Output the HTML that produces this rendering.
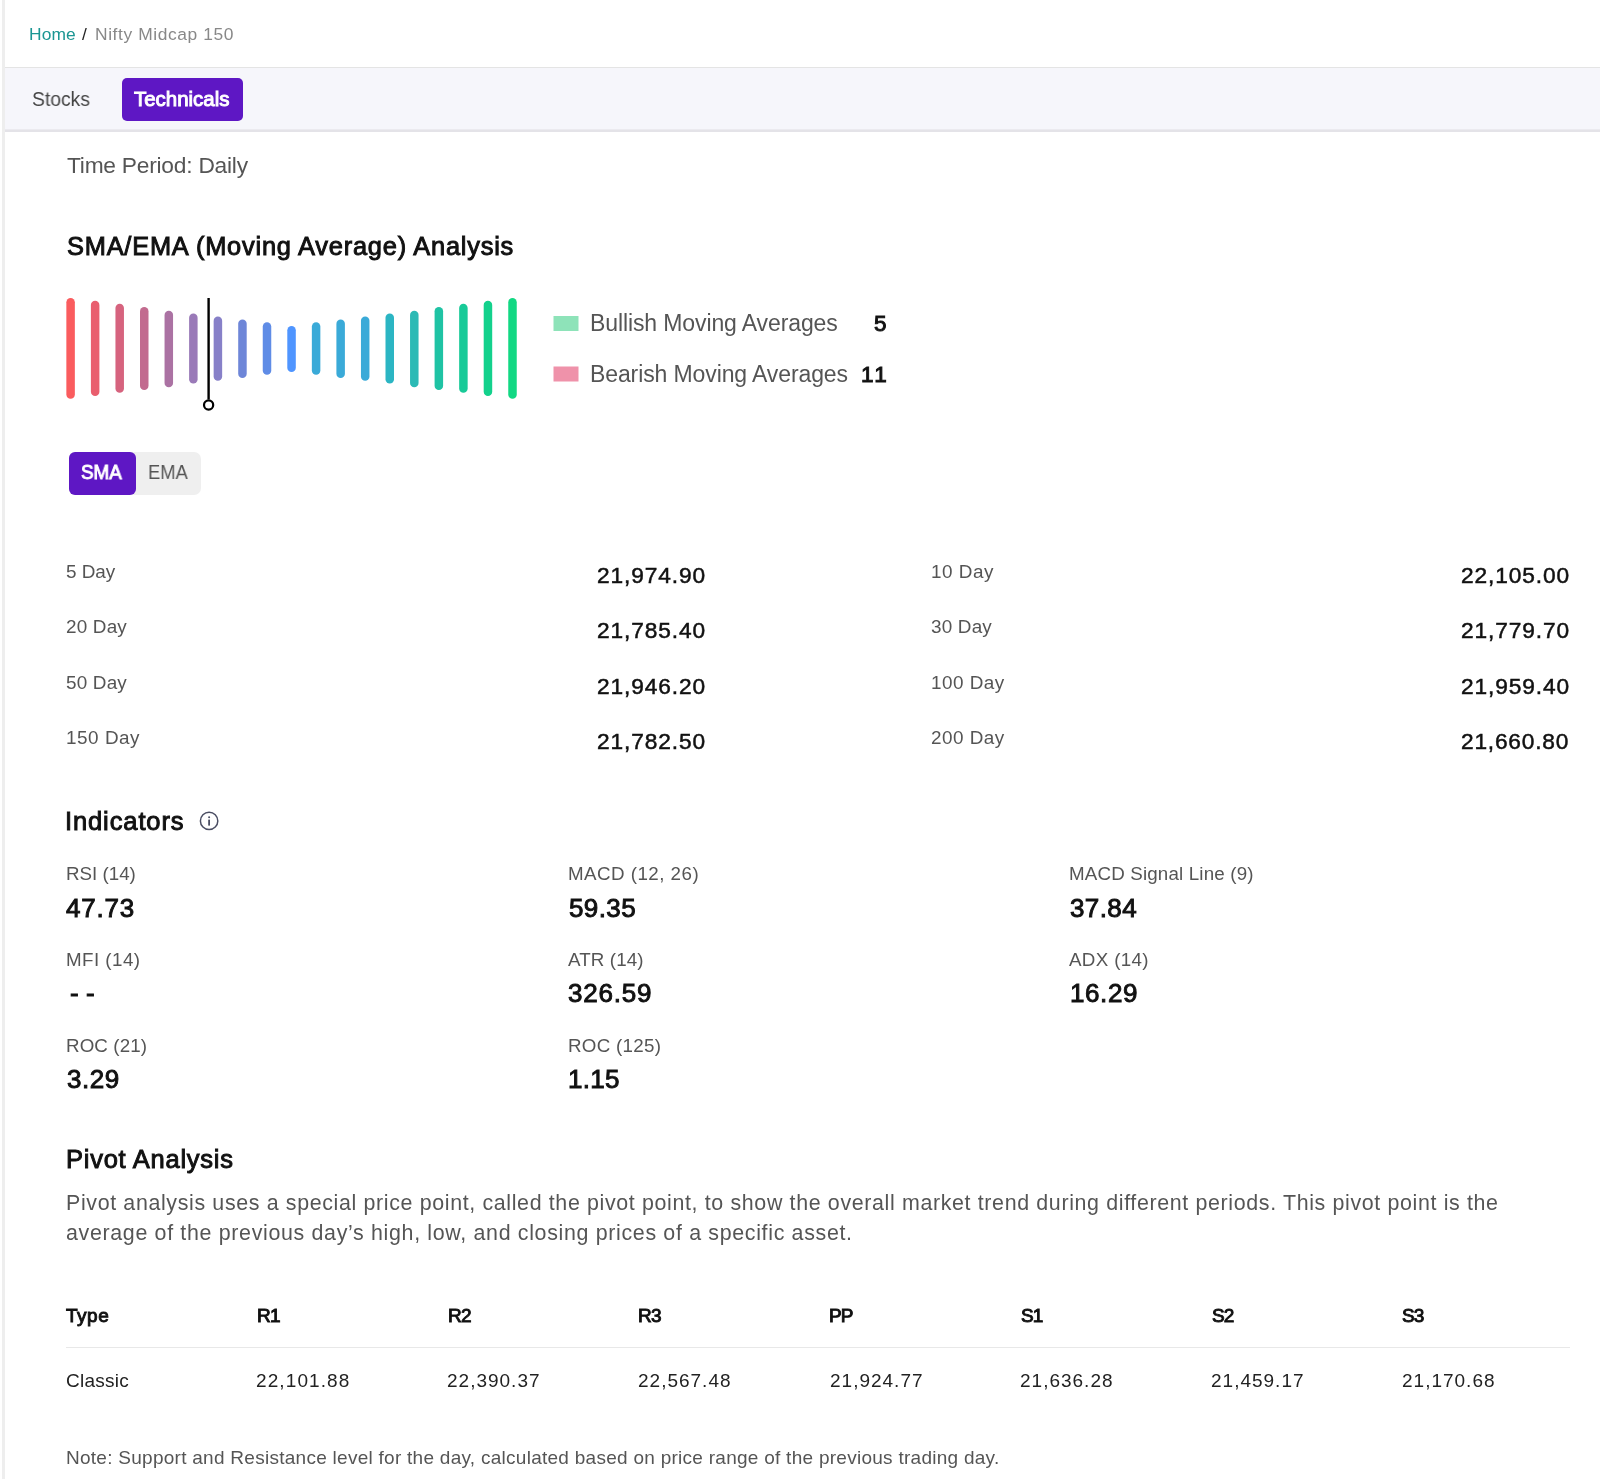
<!DOCTYPE html>
<html><head><meta charset="utf-8"><title>Nifty Midcap 150 Technicals</title>
<style>
html,body{margin:0;padding:0;background:#fff;}
body{width:1600px;height:1479px;position:relative;overflow:hidden;font-family:"Liberation Sans",sans-serif;}
.t{position:absolute;white-space:nowrap;line-height:40px;will-change:transform;}
.lb{position:absolute;left:2px;top:0;width:3px;height:1479px;background:#eeeeee;}
.strip{position:absolute;left:5px;top:67px;width:1595px;height:62px;background:#f6f6fb;border-top:1px solid #e4e4e4;}
.strip2{position:absolute;left:5px;top:129px;width:1595px;height:1px;background:#ebeaef;}
.strip3{position:absolute;left:5px;top:130px;width:1595px;height:2px;background:#e4e3e8;}
.tech{position:absolute;left:122px;top:78px;width:120.5px;height:42.5px;background:#5e17c4;border-radius:5px;}
.tog{position:absolute;left:69px;top:452px;width:131.6px;height:43px;background:#efefef;border-radius:7px;}
.sma{position:absolute;left:69px;top:452px;width:67px;height:43px;background:#5e17c4;border-radius:6px;}
.sep{position:absolute;left:66px;top:1346.5px;width:1504px;height:1.5px;background:#e8e8e8;}
.chart{position:absolute;left:0;top:0;}
</style></head><body>
<div class="lb"></div>
<div class="strip"></div><div class="strip2"></div><div class="strip3"></div>
<div class="tech"></div>
<div class="tog"></div><div class="sma"></div>
<div class="sep"></div>
<svg class="chart" width="1600" height="1479" viewBox="0 0 1600 1479"><line x1="70.60" y1="302.25" x2="70.60" y2="394.50" stroke="#fa5c5e" stroke-width="8.5" stroke-linecap="round"/><line x1="95.15" y1="305.05" x2="95.15" y2="391.75" stroke="#e95e6e" stroke-width="8.5" stroke-linecap="round"/><line x1="119.70" y1="308.00" x2="119.70" y2="388.55" stroke="#d6637e" stroke-width="8.5" stroke-linecap="round"/><line x1="144.25" y1="311.15" x2="144.25" y2="385.75" stroke="#c26b8f" stroke-width="8.5" stroke-linecap="round"/><line x1="168.80" y1="315.05" x2="168.80" y2="382.95" stroke="#ab72a3" stroke-width="8.5" stroke-linecap="round"/><line x1="193.35" y1="317.85" x2="193.35" y2="379.15" stroke="#9a7ab8" stroke-width="8.5" stroke-linecap="round"/><line x1="217.90" y1="320.65" x2="217.90" y2="376.55" stroke="#8780c8" stroke-width="8.5" stroke-linecap="round"/><line x1="242.45" y1="323.65" x2="242.45" y2="373.75" stroke="#6e86d8" stroke-width="8.5" stroke-linecap="round"/><line x1="267.00" y1="326.45" x2="267.00" y2="370.45" stroke="#5f8ce6" stroke-width="8.5" stroke-linecap="round"/><line x1="291.55" y1="330.25" x2="291.55" y2="367.65" stroke="#4f95ff" stroke-width="8.5" stroke-linecap="round"/><line x1="316.10" y1="326.45" x2="316.10" y2="370.45" stroke="#3aaad8" stroke-width="8.5" stroke-linecap="round"/><line x1="340.65" y1="323.65" x2="340.65" y2="373.75" stroke="#3aaad8" stroke-width="8.5" stroke-linecap="round"/><line x1="365.20" y1="320.65" x2="365.20" y2="376.55" stroke="#3aaad8" stroke-width="8.5" stroke-linecap="round"/><line x1="389.75" y1="317.85" x2="389.75" y2="379.15" stroke="#2bb5c3" stroke-width="8.5" stroke-linecap="round"/><line x1="414.30" y1="315.05" x2="414.30" y2="382.95" stroke="#2bbab5" stroke-width="8.5" stroke-linecap="round"/><line x1="438.85" y1="311.15" x2="438.85" y2="385.75" stroke="#1fc3a4" stroke-width="8.5" stroke-linecap="round"/><line x1="463.40" y1="308.00" x2="463.40" y2="388.55" stroke="#18ca98" stroke-width="8.5" stroke-linecap="round"/><line x1="487.95" y1="305.05" x2="487.95" y2="391.75" stroke="#13d18c" stroke-width="8.5" stroke-linecap="round"/><line x1="512.50" y1="302.25" x2="512.50" y2="394.50" stroke="#12d883" stroke-width="8.5" stroke-linecap="round"/><line x1="208.6" y1="298" x2="208.6" y2="399.5" stroke="#000" stroke-width="2.4"/><circle cx="208.6" cy="405" r="4.6" fill="#fff" stroke="#000" stroke-width="2.2"/><rect x="553.5" y="316" width="25" height="15" fill="#8ee3b9"/><rect x="553.5" y="366.5" width="25" height="15" fill="#ef92aa"/><circle cx="209.1" cy="820.9" r="8.7" fill="none" stroke="#4b4e63" stroke-width="1.5"/><rect x="208.2" y="819.6" width="1.8" height="6" fill="#4b4e63"/><circle cx="209.1" cy="817.3" r="1" fill="#4b4e63"/></svg>
<div class="t" style="left:29.30px;top:14px;font-size:17.4px;color:#1b9693;letter-spacing:0.107px;">Home</div>
<div class="t" style="left:82.30px;top:14px;font-size:17.4px;color:#222;letter-spacing:0.000px;">/</div>
<div class="t" style="left:94.50px;top:14px;font-size:17.4px;color:#888;letter-spacing:0.587px;">Nifty Midcap 150</div>
<div class="t" style="left:32.25px;top:79px;font-size:19.8px;color:#444;letter-spacing:0.000px;transform:scaleX(0.9755);transform-origin:0 0;">Stocks</div>
<div class="t" style="left:134.40px;top:79px;font-size:20.3px;color:#fff;letter-spacing:0.000px;transform:scaleX(1.0084);transform-origin:0 0;-webkit-text-stroke:0.95px currentColor;">Technicals</div>
<div class="t" style="left:66.70px;top:145px;font-size:22.75px;color:#555;letter-spacing:-0.235px;">Time Period: Daily</div>
<div class="t" style="left:66.80px;top:226px;font-size:25.4px;color:#111;letter-spacing:0.775px;-webkit-text-stroke:0.95px currentColor;">SMA/EMA (Moving Average) Analysis</div>
<div class="t" style="left:589.95px;top:303px;font-size:23px;color:#555;letter-spacing:-0.109px;">Bullish Moving Averages</div>
<div class="t" style="left:589.95px;top:354px;font-size:23px;color:#555;letter-spacing:-0.109px;">Bearish Moving Averages</div>
<div class="t" style="left:874.30px;top:304px;font-size:22.5px;color:#111;letter-spacing:0.000px;-webkit-text-stroke:0.95px currentColor;">5</div>
<div class="t" style="left:860.80px;top:355px;font-size:22.5px;color:#111;letter-spacing:2.400px;-webkit-text-stroke:0.95px currentColor;">11</div>
<div class="t" style="left:81.30px;top:452px;font-size:20px;color:#fff;letter-spacing:0.000px;transform:scaleX(0.9405);transform-origin:0 0;-webkit-text-stroke:0.95px currentColor;">SMA</div>
<div class="t" style="left:148.40px;top:452px;font-size:20px;color:#555;letter-spacing:0.000px;transform:scaleX(0.9185);transform-origin:0 0;">EMA</div>
<div class="t" style="left:66.20px;top:552px;font-size:18.9px;color:#555;letter-spacing:-0.040px;">5 Day</div>
<div class="t" style="left:596.50px;top:555px;font-size:22.7px;color:#111;letter-spacing:0.900px;-webkit-text-stroke:0.5px currentColor;">21,974.90</div>
<div class="t" style="left:930.50px;top:552px;font-size:18.9px;color:#555;letter-spacing:0.512px;">10 Day</div>
<div class="t" style="left:1461.10px;top:555px;font-size:22.7px;color:#111;letter-spacing:0.900px;-webkit-text-stroke:0.5px currentColor;">22,105.00</div>
<div class="t" style="left:66.20px;top:607px;font-size:18.9px;color:#555;letter-spacing:0.192px;">20 Day</div>
<div class="t" style="left:596.50px;top:610px;font-size:22.7px;color:#111;letter-spacing:0.900px;-webkit-text-stroke:0.5px currentColor;">21,785.40</div>
<div class="t" style="left:930.50px;top:607px;font-size:18.9px;color:#555;letter-spacing:0.192px;">30 Day</div>
<div class="t" style="left:1461.10px;top:610px;font-size:22.7px;color:#111;letter-spacing:0.900px;-webkit-text-stroke:0.5px currentColor;">21,779.70</div>
<div class="t" style="left:66.20px;top:663px;font-size:18.9px;color:#555;letter-spacing:0.192px;">50 Day</div>
<div class="t" style="left:596.50px;top:666px;font-size:22.7px;color:#111;letter-spacing:0.900px;-webkit-text-stroke:0.5px currentColor;">21,946.20</div>
<div class="t" style="left:930.50px;top:663px;font-size:18.9px;color:#555;letter-spacing:0.480px;">100 Day</div>
<div class="t" style="left:1461.10px;top:666px;font-size:22.7px;color:#111;letter-spacing:0.900px;-webkit-text-stroke:0.5px currentColor;">21,959.40</div>
<div class="t" style="left:66.20px;top:718px;font-size:18.9px;color:#555;letter-spacing:0.533px;">150 Day</div>
<div class="t" style="left:596.50px;top:721px;font-size:22.7px;color:#111;letter-spacing:0.900px;-webkit-text-stroke:0.5px currentColor;">21,782.50</div>
<div class="t" style="left:930.50px;top:718px;font-size:18.9px;color:#555;letter-spacing:0.480px;">200 Day</div>
<div class="t" style="left:1461.20px;top:721px;font-size:22.7px;color:#111;letter-spacing:0.800px;-webkit-text-stroke:0.5px currentColor;">21,660.80</div>
<div class="t" style="left:65.40px;top:801px;font-size:25.5px;color:#111;letter-spacing:0.889px;-webkit-text-stroke:0.95px currentColor;">Indicators</div>
<div class="t" style="left:66.20px;top:854px;font-size:18.75px;color:#555;letter-spacing:0.000px;">RSI (14)</div>
<div class="t" style="left:66.40px;top:888px;font-size:26px;color:#111;letter-spacing:0.800px;-webkit-text-stroke:0.95px currentColor;">47.73</div>
<div class="t" style="left:567.80px;top:854px;font-size:18.75px;color:#555;letter-spacing:0.467px;">MACD (12, 26)</div>
<div class="t" style="left:568.60px;top:888px;font-size:26px;color:#111;letter-spacing:0.400px;-webkit-text-stroke:0.95px currentColor;">59.35</div>
<div class="t" style="left:1068.75px;top:854px;font-size:18.75px;color:#555;letter-spacing:0.168px;">MACD Signal Line (9)</div>
<div class="t" style="left:1069.55px;top:888px;font-size:26px;color:#111;letter-spacing:0.400px;-webkit-text-stroke:0.95px currentColor;">37.84</div>
<div class="t" style="left:65.90px;top:940px;font-size:18.75px;color:#555;letter-spacing:0.457px;">MFI (14)</div>
<div class="t" style="left:69.55px;top:973px;font-size:26px;color:#111;letter-spacing:-0.000px;-webkit-text-stroke:0.95px currentColor;">- -</div>
<div class="t" style="left:567.90px;top:940px;font-size:18.75px;color:#555;letter-spacing:0.114px;">ATR (14)</div>
<div class="t" style="left:568.30px;top:973px;font-size:26px;color:#111;letter-spacing:0.800px;-webkit-text-stroke:0.95px currentColor;">326.59</div>
<div class="t" style="left:1068.80px;top:940px;font-size:18.75px;color:#555;letter-spacing:0.343px;">ADX (14)</div>
<div class="t" style="left:1069.60px;top:973px;font-size:26px;color:#111;letter-spacing:0.600px;-webkit-text-stroke:0.95px currentColor;">16.29</div>
<div class="t" style="left:65.90px;top:1026px;font-size:18.75px;color:#555;letter-spacing:0.114px;">ROC (21)</div>
<div class="t" style="left:67.05px;top:1059px;font-size:26px;color:#111;letter-spacing:0.533px;-webkit-text-stroke:0.95px currentColor;">3.29</div>
<div class="t" style="left:567.50px;top:1026px;font-size:18.75px;color:#555;letter-spacing:0.300px;">ROC (125)</div>
<div class="t" style="left:568.40px;top:1059px;font-size:26px;color:#111;letter-spacing:0.267px;-webkit-text-stroke:0.95px currentColor;">1.15</div>
<div class="t" style="left:66.00px;top:1139px;font-size:25.5px;color:#111;letter-spacing:0.738px;-webkit-text-stroke:0.95px currentColor;">Pivot Analysis</div>
<div class="t" style="left:66.25px;top:1183px;font-size:21.4px;color:#555;letter-spacing:0.643px;">Pivot analysis uses a special price point, called the pivot point, to show the overall market trend during different periods. This pivot point is the</div>
<div class="t" style="left:66.00px;top:1213px;font-size:21.4px;color:#555;letter-spacing:0.668px;">average of the previous day’s high, low, and closing prices of a specific asset.</div>
<div class="t" style="left:66.10px;top:1296px;font-size:19px;color:#111;letter-spacing:0.533px;-webkit-text-stroke:0.95px currentColor;">Type</div>
<div class="t" style="left:65.75px;top:1361px;font-size:19px;color:#222;letter-spacing:0.267px;">Classic</div>
<div class="t" style="left:256.78px;top:1296px;font-size:19px;color:#111;letter-spacing:-0.800px;-webkit-text-stroke:0.95px currentColor;">R1</div>
<div class="t" style="left:256.20px;top:1361px;font-size:19px;color:#222;letter-spacing:1.100px;">22,101.88</div>
<div class="t" style="left:447.62px;top:1296px;font-size:19px;color:#111;letter-spacing:-0.800px;-webkit-text-stroke:0.95px currentColor;">R2</div>
<div class="t" style="left:446.92px;top:1361px;font-size:19px;color:#222;letter-spacing:1.000px;">22,390.37</div>
<div class="t" style="left:638.46px;top:1296px;font-size:19px;color:#111;letter-spacing:-0.800px;-webkit-text-stroke:0.95px currentColor;">R3</div>
<div class="t" style="left:638.23px;top:1361px;font-size:19px;color:#222;letter-spacing:1.000px;">22,567.48</div>
<div class="t" style="left:829.30px;top:1296px;font-size:19px;color:#111;letter-spacing:-0.800px;-webkit-text-stroke:0.95px currentColor;">PP</div>
<div class="t" style="left:829.53px;top:1361px;font-size:19px;color:#222;letter-spacing:1.000px;">21,924.77</div>
<div class="t" style="left:1020.94px;top:1296px;font-size:19px;color:#111;letter-spacing:-0.800px;-webkit-text-stroke:0.95px currentColor;">S1</div>
<div class="t" style="left:1020.04px;top:1361px;font-size:19px;color:#222;letter-spacing:1.000px;">21,636.28</div>
<div class="t" style="left:1211.78px;top:1296px;font-size:19px;color:#111;letter-spacing:-0.800px;-webkit-text-stroke:0.95px currentColor;">S2</div>
<div class="t" style="left:1211.34px;top:1361px;font-size:19px;color:#222;letter-spacing:1.000px;">21,459.17</div>
<div class="t" style="left:1402.40px;top:1296px;font-size:19px;color:#111;letter-spacing:-0.800px;-webkit-text-stroke:0.95px currentColor;">S3</div>
<div class="t" style="left:1402.10px;top:1361px;font-size:19px;color:#222;letter-spacing:1.000px;">21,170.68</div>
<div class="t" style="left:66.00px;top:1438px;font-size:19px;color:#555;letter-spacing:0.269px;">Note: Support and Resistance level for the day, calculated based on price range of the previous trading day.</div>
</body></html>
